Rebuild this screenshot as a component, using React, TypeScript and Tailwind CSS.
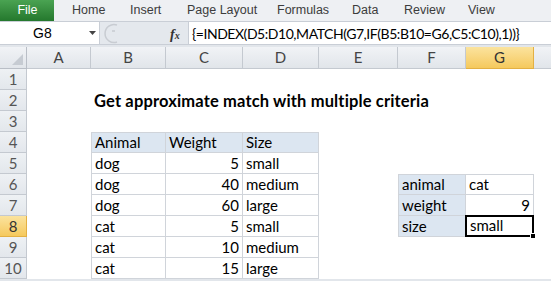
import React from "react";

const cols = ["A", "B", "C", "D", "E", "F", "G"];

type CellDef = {
  text?: string;
  cls?: string;
};

const tb = "border-r border-b border-[#d0d4da]";

function buildRow(r: number): CellDef[] {
  const row: CellDef[] = Array.from({ length: 8 }, () => ({}));
  if (r === 2) {
    row[1] = { text: "Get approximate match with multiple criteria", cls: "font-bold whitespace-nowrap overflow-visible z-10 text-[16.5px] tracking-[0.15px]" };
  }
  if (r === 4) {
    row[1] = { text: "Animal", cls: `bg-[#dce6f1] border-t border-l ${tb}` };
    row[2] = { text: "Weight", cls: `bg-[#dce6f1] border-t ${tb}` };
    row[3] = { text: "Size", cls: `bg-[#dce6f1] border-t ${tb}` };
  }
  const data: Record<number, [string, string, string]> = {
    5: ["dog", "5", "small"],
    6: ["dog", "40", "medium"],
    7: ["dog", "60", "large"],
    8: ["cat", "5", "small"],
    9: ["cat", "10", "medium"],
    10: ["cat", "15", "large"],
  };
  if (data[r]) {
    const [a, w, s] = data[r];
    row[1] = { text: a, cls: `border-l ${tb}` };
    row[2] = { text: w, cls: `justify-end ${tb}` };
    row[3] = { text: s, cls: tb };
  }
  if (r === 6) {
    row[5] = { text: "animal", cls: `bg-[#dce6f1] border-t border-l ${tb}` };
    row[6] = { text: "cat", cls: `border-t ${tb}` };
  }
  if (r === 7) {
    row[5] = { text: "weight", cls: `bg-[#dce6f1] border-l ${tb}` };
    row[6] = { text: "9", cls: `justify-end ${tb}` };
  }
  if (r === 8) {
    row[5] = { text: "size", cls: `bg-[#dce6f1] border-l ${tb}` };
    row[6] = { text: "small", cls: "relative border-2 border-black -mt-[1px] -ml-[1px]" };
  }
  return row;
}

const tabs: { label: string; w: string }[] = [
  { label: "Home", w: "w-[58px]" },
  { label: "Insert", w: "w-[57px]" },
  { label: "Page Layout", w: "w-[90px]" },
  { label: "Formulas", w: "w-[75px]" },
  { label: "Data", w: "w-[52px]" },
  { label: "Review", w: "w-[64px]" },
  { label: "View", w: "w-[50px]" },
];

export default function App() {
  const rows = Array.from({ length: 10 }, (_, i) => i + 1);
  return (
    <div className="w-[551px] h-[281px] overflow-hidden bg-[#e2e6eb] font-['Lato',sans-serif] text-black">
      {/* Ribbon tabs */}
      <div className="flex h-[22px] bg-[#eef0f3] border-b border-[#c9ced6] font-['Liberation_Sans',sans-serif] text-[12.5px] text-[#3c3c3c]">
        <div className="w-[54px] h-full flex items-center justify-center bg-gradient-to-b from-[#4aa352] to-[#24782d] text-white">
          <span className="pl-[1px]">File</span>
        </div>
        <div className="w-[18px]" />
        {tabs.map((t) => (
          <div key={t.label} className={`${t.w} h-full flex items-center`}>
            {t.label}
          </div>
        ))}
      </div>

      {/* Formula bar */}
      <div className="flex h-[23px] bg-[#e4e8ed] border-b border-[#c9ced6]">
        <div className="w-[100px] h-full bg-white border-r border-[#c9ced6] flex items-center relative">
          <span className="pl-[33px] font-['Liberation_Sans',sans-serif] text-[14px]">G8</span>
          <svg className="absolute left-[89px] top-[9px]" width="7" height="4" viewBox="0 0 7 4">
            <path d="M0 0 H7 L3.5 4 Z" fill="#444" />
          </svg>
        </div>
        <div className="w-[88px] h-full flex items-center relative">
          <svg className="absolute left-[3px] top-[1px]" width="18" height="21" viewBox="0 0 18 21">
            <path d="M14 2 A9 9 0 1 0 14 19" fill="none" stroke="#c8ccd2" strokeWidth="1.5" />
            <path d="M9 8 h3" stroke="#b8bcc2" strokeWidth="1" />
          </svg>
          <span className="absolute left-[70px] top-[2px] font-['Liberation_Serif',serif] italic font-bold text-[14px] text-[#333]">
            f<span className="text-[10px]">x</span>
          </span>
        </div>
        <div className="flex-1 h-full bg-white border-l border-[#c9ced6] flex items-center pl-[3px] text-[14px] tracking-[-0.45px] whitespace-nowrap overflow-hidden">
          {"{=INDEX(D5:D10,MATCH(G7,IF(B5:B10=G6,C5:C10),1))}"}
        </div>
      </div>

      {/* Spacer */}
      <div className="h-[2px] bg-[#e2e6eb]" />

      {/* Sheet grid */}
      <div className="grid grid-cols-[27px_64px_75px_77px_76px_79px_68px_68px_1fr] grid-rows-[22px_repeat(10,21px)] bg-white text-[15px]">
        {/* header row */}
        <div className="bg-gradient-to-b from-[#f1f3f6] to-[#e1e5ea] border-r border-b border-[#b9bec6] relative">
          <svg className="absolute right-[3px] bottom-[3px]" width="11" height="11" viewBox="0 0 11 11">
            <path d="M11 0 V11 H0 Z" fill="#c6cbd2" />
          </svg>
        </div>
        {cols.map((c) => (
          <div
            key={c}
            className={
              c === "G"
                ? "flex items-center justify-center bg-gradient-to-b from-[#fbe39d] to-[#f5c95c] border-r border-b border-[#e3b043] text-[#333]"
                : "flex items-center justify-center bg-gradient-to-b from-[#f1f3f6] to-[#e1e5ea] border-r border-b border-[#c4c9d0] text-[#444]"
            }
          >
            {c}
          </div>
        ))}
        <div className="bg-gradient-to-b from-[#f1f3f6] to-[#e1e5ea] border-b border-[#c4c9d0]" />

        {rows.map((r) => {
          const cells = buildRow(r);
          return (
            <React.Fragment key={r}>
              <div
                className={
                  r === 8
                    ? "flex items-center justify-center bg-gradient-to-b from-[#fbe39d] to-[#f5c95c] border-r border-b border-[#e3b043] text-[#333]"
                    : "flex items-center justify-center bg-gradient-to-b from-[#eef1f4] to-[#e3e7ec] border-r border-b border-[#c4c9d0] text-[#555]"
                }
              >
                {r}
              </div>
              {cells.map((c, i) => (
                <div
                  key={i}
                  className={`flex items-end pb-[1px] px-[3px] leading-[18px] ${c.cls ?? ""}`}
                >
                  {c.text}
                  {r === 8 && i === 6 ? (
                    <div className="absolute -right-[4px] -bottom-[4px] w-[6px] h-[6px] bg-black border border-white" />
                  ) : null}
                </div>
              ))}
            </React.Fragment>
          );
        })}
      </div>
    </div>
  );
}
